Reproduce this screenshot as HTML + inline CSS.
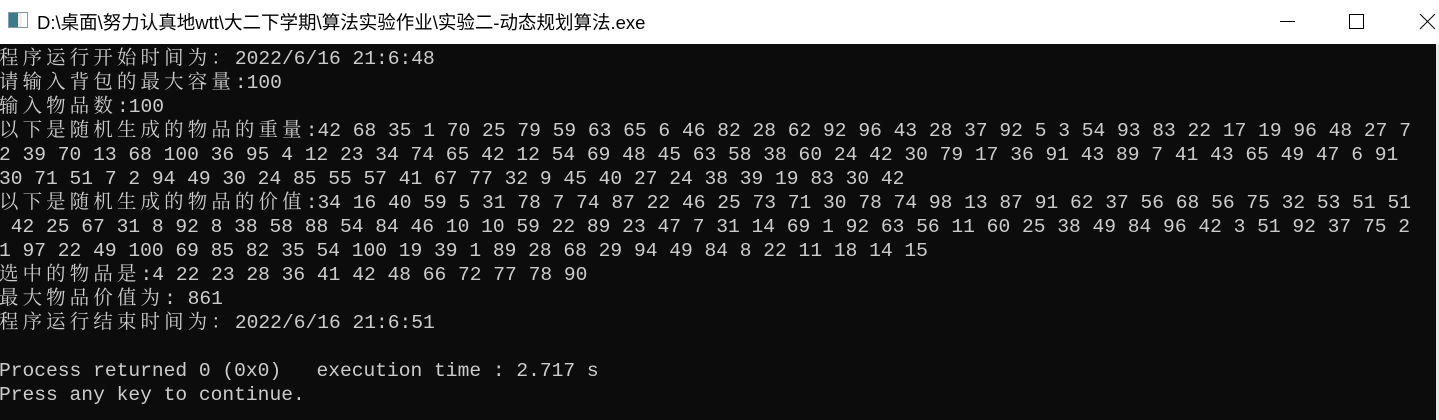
<!DOCTYPE html>
<html><head><meta charset="utf-8"><style>
body{margin:0;width:1439px;height:420px;overflow:hidden;background:#fff;position:relative;font-family:"Liberation Sans","Noto Sans CJK SC",sans-serif}
.title{position:absolute;left:0;top:0;width:1439px;height:44px;background:#fff}
.ttext{position:absolute;left:37px;top:9px;font-size:18.5px;color:#000;white-space:nowrap}
.icon{position:absolute;left:8px;top:12px;width:20px;height:16px;border:1px solid #8a9aa8;background:linear-gradient(90deg,#3a7a8a 0 9px,#eee 9px 13px,#fff 13px);box-sizing:border-box}
.con{position:absolute;left:0;top:44px;width:1436px;height:376px;background:#0c0c0c;overflow:hidden}
.sb{position:absolute;left:1436px;top:44px;width:3px;height:376px;background:#e8e8e8}
.t{position:absolute;left:-1px;top:3px;font-family:"Liberation Mono",monospace;font-size:19.6px;color:#cccccc}
.t div{height:24px;line-height:24px;white-space:pre;overflow:visible}
.c{font-family:"Noto Serif CJK SC","Noto Sans CJK SC",serif;letter-spacing:4.2px;font-size:19.4px;line-height:24px;vertical-align:top;position:relative;top:-3px}
</style></head><body>
<div class="title"><div class="icon"></div><div class="ttext">D:\桌面\努力认真地wtt\大二下学期\算法实验作业\实验二-动态规划算法.exe</div>
<svg style="position:absolute;left:1280px;top:14px" width="170" height="20"><line x1="0" y1="7.5" x2="15" y2="7.5" stroke="#000"/><rect x="69.5" y="0.5" width="14" height="14" fill="none" stroke="#000"/><path d="M140 0 L155 15 M155 0 L140 15" stroke="#000"/></svg></div>
<div class="con"><div class="t">
<div><span class="c">程序运行开始时间为：</span>2022/6/16 21:6:48</div>
<div><span class="c">请输入背包的最大容量</span>:100</div>
<div><span class="c">输入物品数</span>:100</div>
<div><span class="c">以下是随机生成的物品的重量</span>:42 68 35 1 70 25 79 59 63 65 6 46 82 28 62 92 96 43 28 37 92 5 3 54 93 83 22 17 19 96 48 27 7</div>
<div>2 39 70 13 68 100 36 95 4 12 23 34 74 65 42 12 54 69 48 45 63 58 38 60 24 42 30 79 17 36 91 43 89 7 41 43 65 49 47 6 91</div>
<div>30 71 51 7 2 94 49 30 24 85 55 57 41 67 77 32 9 45 40 27 24 38 39 19 83 30 42</div>
<div><span class="c">以下是随机生成的物品的价值</span>:34 16 40 59 5 31 78 7 74 87 22 46 25 73 71 30 78 74 98 13 87 91 62 37 56 68 56 75 32 53 51 51</div>
<div> 42 25 67 31 8 92 8 38 58 88 54 84 46 10 10 59 22 89 23 47 7 31 14 69 1 92 63 56 11 60 25 38 49 84 96 42 3 51 92 37 75 2</div>
<div>1 97 22 49 100 69 85 82 35 54 100 19 39 1 89 28 68 29 94 49 84 8 22 11 18 14 15</div>
<div><span class="c">选中的物品是</span>:4 22 23 28 36 41 42 48 66 72 77 78 90</div>
<div><span class="c">最大物品价值为</span>: 861</div>
<div><span class="c">程序运行结束时间为：</span>2022/6/16 21:6:51</div>
<div></div>
<div>Process returned 0 (0x0)   execution time : 2.717 s</div>
<div>Press any key to continue.</div>
</div></div>
<div class="sb"></div>
</body></html>
